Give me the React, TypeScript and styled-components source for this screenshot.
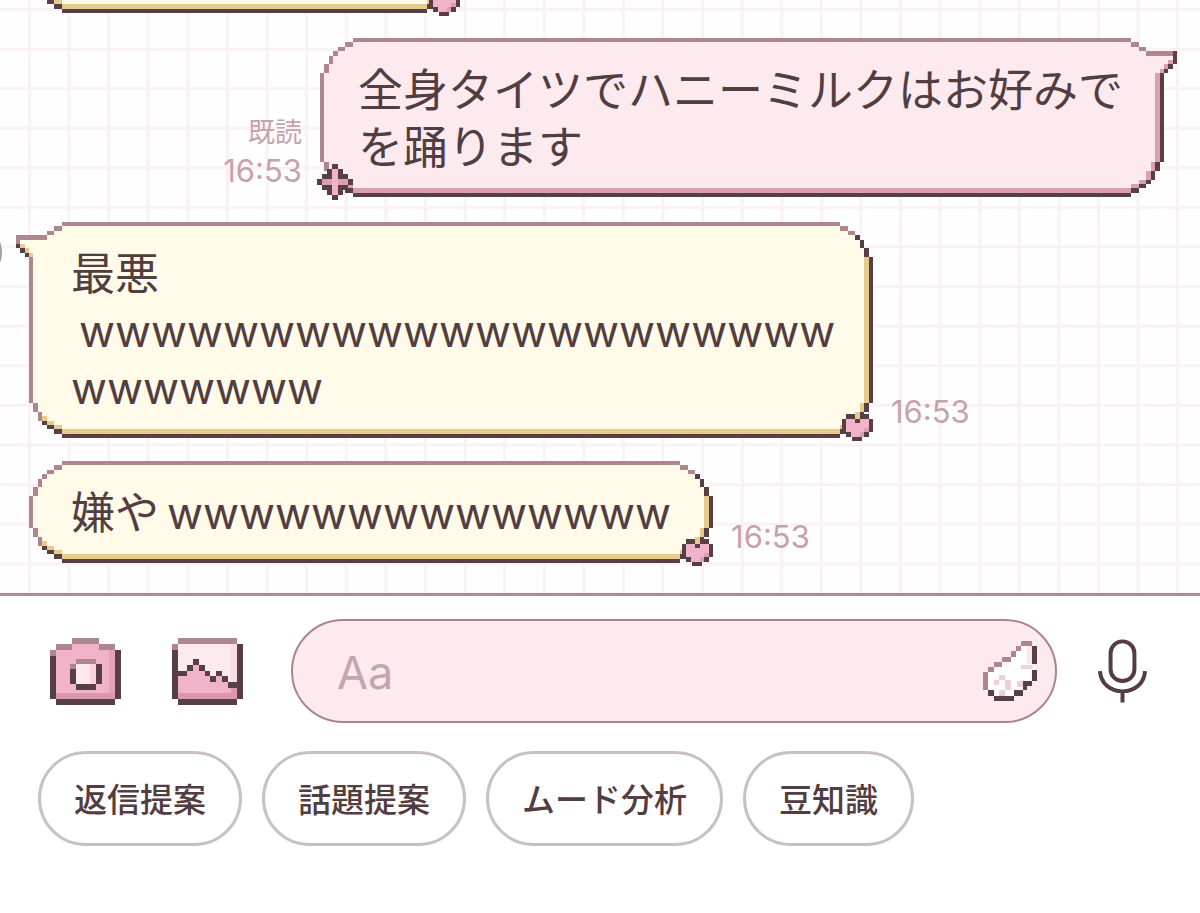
import React from "react";
import styled, { createGlobalStyle } from "styled-components";

const color = {
  ink: "#523d41",
  outline: "#583f46",
  mauve: "#af858e",
  rose: "#dba0ae",
  pink: "#f1b3c9",
  blush: "#fceaee",
  cream: "#fffbe8",
  gold: "#e6cb8c",
  muted: "#c6a2aa",
  grid: "#faf1f2",
  chip: "#c9c0c2",
};

const GlobalStyle = createGlobalStyle`
  *, *::before, *::after { box-sizing: border-box; }
  body {
    margin: 0;
    background: #fff;
    color: ${color.ink};
    font-family: Inter, "Noto Sans CJK JP", sans-serif;
  }
  button, input { font: inherit; color: inherit; }
`;

/* ---------- pixel corners ---------- */

const COLS = [0, 4.4, 8.8, 13.2, 17.7, 21.5, 25.3, 29.2, 33];
const ROW = 35 / 8;

/* Columns near the straight edge are slightly narrower than the outer ones. */
const colX = (i: number, mirrored: boolean): number => {
  if (mirrored) return 33 - colX(8 - i, false);
  if (i < 0) return i * 4.4;
  if (i > 8) return 33 + (i - 8) * 4.4;
  return COLS[i];
};

type Tone = "cream" | "blush";
const palette = (tone: Tone): Record<string, string> => ({
  m: color.mauve,
  d: color.outline,
  g: tone === "cream" ? color.gold : color.rose,
  f: tone === "cream" ? color.cream : color.blush,
});

const TOP_LEFT = ["........", "......mm", "....mmff", "...mffff", "..mfffff", "..mfffff", ".mffffff", ".mffffff"];
const TOP_RIGHT = ["........", "mm......", "ffmm....", "ffffd...", "fffffd..", "fffffd..", "ffffffd.", "ffffffd."];
const BOTTOM_LEFT = [".mffffff", ".mffffff", "..mfffff", "..mgffff", "...dggff", "....ddgg", "......dd", "........"];
const BOTTOM_RIGHT = ["fffffgd.", "fffffgd.", "ffffgd..", "ffffgd..", "ffggd...", "ggdd....", "dd......", "........"];
const TAIL_LEFT = [
  "...........", ".........mm", ".......mmff", "mmmmmmmffff",
  "mffffffffff", "dgfffffffff", ".dgffffffff", "..dgfffffff",
];
const TAIL_RIGHT = [
  "...........", "mm.........", "ffmm.......", "ffffmmmmmmd",
  "ffffffffffd", "fffffffffgd", "ffffffffgd.", "fffffffgd..",
];

const CornerSvg = styled.svg`
  display: block;
  width: 33px;
  height: 35px;
  overflow: visible;
  shape-rendering: crispEdges;
`;

type CornerName = "tl" | "tr" | "bl" | "br";

function Corner({ name, tone, tail }: { name: CornerName; tone: Tone; tail?: boolean }) {
  const mirrored = name.endsWith("r");
  const map = {
    tl: tail ? TAIL_LEFT : TOP_LEFT,
    tr: tail ? TAIL_RIGHT : TOP_RIGHT,
    bl: BOTTOM_LEFT,
    br: BOTTOM_RIGHT,
  }[name];
  const start = tail && name === "tl" ? -3 : 0;
  const fills = palette(tone);
  return (
    <CornerSvg viewBox="0 0 33 35" aria-hidden="true">
      {map.flatMap((row, y) =>
        row.split("").map((key, i) => {
          if (key === ".") return null;
          const x0 = colX(i + start, mirrored);
          const x1 = colX(i + start + 1, mirrored);
          return <rect key={`${y}-${i}`} x={x0} y={y * ROW} width={x1 - x0} height={ROW} fill={fills[key]} />;
        })
      )}
    </CornerSvg>
  );
}

/* ---------- bubble ornaments ---------- */

const Ornament = styled.svg<{ $side: "left" | "right" }>`
  position: absolute;
  bottom: -3px;
  ${(p) => (p.$side === "left" ? "left: -3px;" : "right: 0;")}
  shape-rendering: crispEdges;
`;

const Heart = () => (
  <Ornament $side="right" width="31" height="27" viewBox="0 0 93 80" aria-hidden="true">
    <path fill={color.pink} d="M13 13H80V53H66V67H26V53H13Z" />
    <path fill={color.rose} d="M66 40H80V53H66V67H53V53H66Z" />
    <path
      fill={color.outline}
      d="M13 0H39V13H13ZM54 0H80V13H54ZM39 13H54V27H39ZM0 13H13V53H0ZM80 13H93V53H80ZM13 53H28V67H13ZM65 53H80V67H65ZM31 67H61V80H31Z"
    />
    <path fill={color.gold} d="M39 0H54V13H39Z" />
  </Ornament>
);

const Sparkle = () => (
  <Ornament $side="left" width="36" height="36" viewBox="0 0 108 108" aria-hidden="true">
    <path
      fill={color.outline}
      d="M46 0H62V15H77V31H93V46H108V62H93V77H77V93H62V108H46V93H31V77H15V62H0V46H15V31H31V15H46Z"
    />
    <path fill={color.rose} d="M46 15H62V46H93V62H62V93H46V62H15V46H46Z" />
    <path fill={color.pink} d="M46 15H62V93H46Z" />
  </Ornament>
);

/* ---------- bubble ---------- */

const BubbleBox = styled.div<{ $wide?: boolean }>`
  position: relative;
  display: grid;
  min-height: 102px;
  flex: 0 1 auto;
  ${(p) => p.$wide && "width: 844px;"}
`;

const Frame = styled.div`
  display: grid;
  grid-area: 1 / 1;
  grid-template: 35px 1fr 35px / 33px 1fr 33px;
`;

const EdgeTop = styled.div<{ $tone: Tone }>`
  border-top: 4px solid ${color.mauve};
  background: ${(p) => palette(p.$tone).f};
`;

const EdgeLeft = styled.div<{ $tone: Tone }>`
  border-left: 4px solid ${color.mauve};
  background: ${(p) => palette(p.$tone).f};
`;

const EdgeRight = styled.div<{ $tone: Tone }>`
  background: ${(p) => palette(p.$tone).f};
  border-right: 4px solid ${color.outline};
  box-shadow: inset -5px 0 ${(p) => palette(p.$tone).g};
`;

const EdgeBottom = styled.div<{ $tone: Tone }>`
  background: ${(p) => palette(p.$tone).f};
  border-bottom: 4px solid ${color.outline};
  box-shadow: inset 0 -5px ${(p) => palette(p.$tone).g};
`;

const Center = styled.div<{ $tone: Tone }>`
  background: ${(p) => palette(p.$tone).f};
`;

const BubbleText = styled.p<{ $tone: Tone; $wide?: boolean }>`
  grid-area: 1 / 1;
  z-index: 1;
  margin: 0;
  padding: 24px ${(p) => (p.$wide ? 36 : 42)}px 21px ${(p) => (p.$tone === "cream" ? 42 : 38)}px;
  font-size: ${(p) => (p.$tone === "cream" ? 44 : 45)}px;
  line-height: 57px;
`;

const Line = styled.span`
  display: block;
  white-space: pre;
`;

interface BubbleProps {
  tone: Tone;
  tail?: boolean;
  wide?: boolean;
  lines: string[];
}

function Bubble({ tone, tail, wide, lines }: BubbleProps) {
  const cream = tone === "cream";
  return (
    <BubbleBox $wide={wide}>
      <Frame>
        <Corner name="tl" tone={tone} tail={tail && cream} />
        <EdgeTop $tone={tone} />
        <Corner name="tr" tone={tone} tail={tail && !cream} />
        <EdgeLeft $tone={tone} />
        <Center $tone={tone} />
        <EdgeRight $tone={tone} />
        <Corner name="bl" tone={tone} />
        <EdgeBottom $tone={tone} />
        <Corner name="br" tone={tone} />
      </Frame>
      {lines.length > 0 && (
        <BubbleText $tone={tone} $wide={wide}>
          {lines.map((line) => (
            <Line key={line}>{line}</Line>
          ))}
        </BubbleText>
      )}
      {cream ? <Heart /> : <Sparkle />}
    </BubbleBox>
  );
}

/* ---------- thread ---------- */

const Thread = styled.main`
  display: flex;
  flex-direction: column;
  gap: 25px;
  padding-bottom: 30px;
  overflow: hidden;
  background-color: #fffeff;
  background-image: linear-gradient(${color.grid} 3px, transparent 3px),
    linear-gradient(90deg, ${color.grid} 3px, transparent 3px);
  background-size: 3.3vw 3.3vw;
  background-position: 28px 8px;
`;

const Message = styled.div<{ $mine?: boolean; $continued?: boolean }>`
  display: flex;
  align-items: flex-end;
  gap: 18px;
  justify-content: ${(p) => (p.$mine ? "flex-end" : "flex-start")};
  padding: ${(p) => (p.$mine ? "0 36px 0 0" : "0 0 0 29px")};
  margin-top: ${(p) => (p.$continued ? -2 : 0)}px;
`;

const Earlier = styled(Message)`
  margin-top: -89px;

  ${BubbleBox} {
    width: 431px;
  }
`;

const Avatar = styled.div`
  align-self: flex-start;
  flex: none;
  width: 60px;
  height: 60px;
  margin: 0 9px 0 -87px;
  border-radius: 50%;
  background: linear-gradient(#a9a196 55%, #5c5350);
`;

const Meta = styled.div`
  display: flex;
  flex-direction: column;
  align-items: flex-end;
  padding-bottom: 7px;
  color: ${color.muted};
  font-size: 31px;
  line-height: 38px;
`;

const Read = styled.span`
  font-size: 27px;
`;

/* ---------- composer ---------- */

const Footer = styled.footer`
  border-top: 3px solid #ae8a93;
  background: #fff;
  padding: 23px 0 66px;
`;

const Composer = styled.form`
  display: flex;
  align-items: center;
  padding: 0 53px 0 50px;
`;

const Tools = styled.div`
  display: flex;
  gap: 51px;
  margin-right: 48px;
`;

const IconButton = styled.button`
  display: block;
  flex: none;
  padding: 0;
  border: 0;
  background: none;
  cursor: pointer;

  svg {
    display: block;
  }
`;

const MicButton = styled(IconButton)`
  margin-left: 41px;
`;

const Field = styled.div`
  display: flex;
  flex: 1;
  align-items: center;
  min-width: 0;
  height: 104px;
  padding: 0 18px 0 44px;
  border: 2px solid #ab848d;
  border-radius: 52px;
  background: ${color.blush};
`;

const TextInput = styled.input`
  flex: 1;
  min-width: 0;
  padding: 4px 0 0;
  border: 0;
  outline: 0;
  background: none;
  font-size: 45px;
  line-height: 56px;

  &::placeholder {
    color: #c5a6ae;
    opacity: 1;
  }
`;

const Chips = styled.nav`
  display: flex;
  flex-wrap: wrap;
  gap: 20px;
  margin-top: 28px;
  padding: 0 38px;
`;

const Chip = styled.button`
  height: 95px;
  padding: 2px 33px 0;
  border: 3px solid ${color.chip};
  border-radius: 48px;
  background: #fff;
  font-size: 33px;
  font-weight: 500;
  line-height: 44px;
  cursor: pointer;
`;

const CameraIcon = () => (
  <svg width="71" height="67" viewBox="60 53 213 202" shapeRendering="crispEdges" aria-hidden="true">
    <path fill={color.pink} d="M127 71H206V89H255V237H78V89H127Z" />
    <path fill="#e6a2b9" d="M237 89H255V237H237Z" />
    <path fill="#dc97ad" d="M78 219H255V237H78Z" />
    <path fill={color.mauve} d="M127 53H206V71H127ZM78 71H127V89H78ZM206 71H255V89H206ZM60 89H78V107H60Z" />
    <path fill={color.outline} d="M60 107H78V237H60ZM255 89H273V237H255ZM78 237H255V255H78Z" />
    <path fill="#fde9ed" d="M139 132H197V192H139Z" />
    <path fill="#f8d3dc" d="M181 132H197V192H181Z" />
    <path fill={color.mauve} d="M139 116H197V132H139ZM121 132H139V147H121Z" />
    <path fill={color.outline} d="M121 147H139V192H121ZM197 132H215V192H197ZM139 192H197V210H139Z" />
  </svg>
);

const PhotoIcon = () => (
  <svg width="71" height="67" viewBox="426 53 214 202" shapeRendering="crispEdges" aria-hidden="true">
    <path fill="#fdeaef" d="M444 71H622V205H444Z" />
    <path fill="#f7dce2" d="M604 71H622V190H604Z" />
    <path
      fill={color.pink}
      d="M444 169H470V151H488V133H506V151H524V169H541V187H559V169H577V187H595V205H622V237H444Z"
    />
    <path fill="#dc97ad" d="M444 219H604V205H622V237H444Z" />
    <path fill={color.mauve} d="M444 53H622V71H444ZM426 71H444V89H426Z" />
    <path
      fill={color.outline}
      d="M426 89H444V237H426ZM622 71H640V237H622ZM444 237H622V255H444ZM444 151H470V169H444ZM470 133H488V151H470ZM488 116H506V133H488ZM506 133H524V151H506ZM524 151H541V169H524ZM541 169H559V187H541ZM559 151H577V169H559ZM577 169H595V187H577ZM595 187H622V205H595Z"
    />
  </svg>
);

const WingIcon = () => (
  <svg width="54" height="60" viewBox="72 93 160 180" shapeRendering="crispEdges" aria-hidden="true">
    <path
      fill="#fff"
      d="M186 107H217V214H190V241H163V257H104V241H87V187H104V170H127V155H154V140H170V123H186Z"
    />
    <path fill="#f9e8ee" d="M202 107H217V162H202Z" />
    <path
      fill="#edd0da"
      d="M186 164H217V178H186ZM120 195H137V210H120ZM104 210H120V225H104ZM137 210H154V241H137ZM174 214H190V230H174ZM120 241H137V257H120Z"
    />
    <path
      fill={color.mauve}
      d="M186 93H217V107H186ZM170 107H186V123H170ZM154 123H170V140H154ZM127 140H154V155H127ZM104 155H127V170H104ZM87 170H104V187H87ZM72 187H87V241H72Z"
    />
    <path
      fill={color.outline}
      d="M217 107H232V162H217ZM217 179H232V214H217ZM190 214H217V228H204V241H190ZM163 241H190V257H163ZM104 257H163V273H104ZM87 241H104V257H87Z"
    />
  </svg>
);

const MicIcon = () => (
  <svg width="49" height="64" viewBox="414 87 148 191" fill="none" stroke={color.ink} strokeWidth="12" aria-hidden="true">
    <rect x="452" y="93" width="72" height="120" rx="36" />
    <path d="M420 183C422 220 451 244 488 244S554 220 556 183M488 244V278" />
  </svg>
);

const suggestions = ["返信提案", "話題提案", "ムード分析", "豆知識"];

export default function App() {
  return (
    <div lang="ja">
      <GlobalStyle />
      <Thread>
        <Earlier>
          <Bubble tone="cream" lines={[]} />
        </Earlier>
        <Message $mine>
          <Meta>
            <Read>既読</Read>
            <time>16:53</time>
          </Meta>
          <Bubble tone="blush" tail wide lines={["全身タイツでハニーミルクはお好みで", "を踊ります"]} />
        </Message>
        <Message>
          <Avatar />
          <Bubble tone="cream" tail wide lines={["最悪", "\u2009wwwwwwwwwwwwwwwwwwwww", "wwwwwww"]} />
          <Meta>
            <time>16:53</time>
          </Meta>
        </Message>
        <Message $continued>
          <Bubble tone="cream" lines={["嫌や\u2009wwwwwwwwwwwwww"]} />
          <Meta>
            <time>16:53</time>
          </Meta>
        </Message>
      </Thread>
      <Footer>
        <Composer onSubmit={(e: React.FormEvent) => e.preventDefault()}>
          <Tools>
            <IconButton type="button" aria-label="カメラ">
              <CameraIcon />
            </IconButton>
            <IconButton type="button" aria-label="写真">
              <PhotoIcon />
            </IconButton>
          </Tools>
          <Field>
            <TextInput type="text" placeholder="Aa" aria-label="メッセージ" />
            <IconButton type="button" aria-label="スタンプ">
              <WingIcon />
            </IconButton>
          </Field>
          <MicButton type="button" aria-label="ボイスメッセージ">
            <MicIcon />
          </MicButton>
        </Composer>
        <Chips>
          {suggestions.map((label) => (
            <Chip key={label} type="button">
              {label}
            </Chip>
          ))}
        </Chips>
      </Footer>
    </div>
  );
}
